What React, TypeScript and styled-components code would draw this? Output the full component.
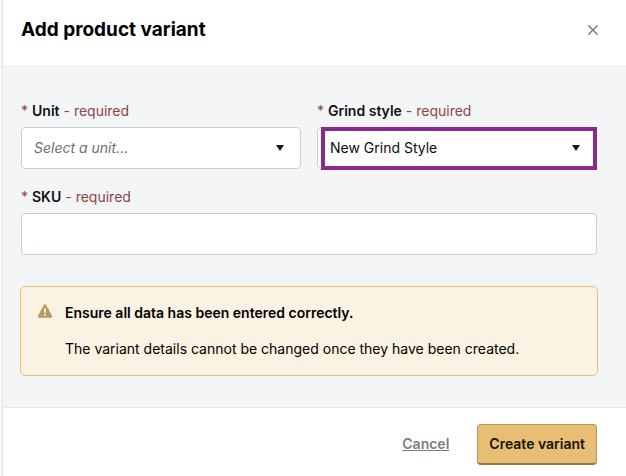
import React, { useState } from "react";
import styled, { createGlobalStyle } from "styled-components";

const GlobalStyle = createGlobalStyle`
  *, *::before, *::after { box-sizing: border-box; }
  body {
    margin: 0;
    background: #ffffff;
    color: #0b0c0d;
    font-family: Inter, "Liberation Sans", sans-serif;
    font-size: 14px;
    line-height: 20px;
  }
  button, input, select { font: inherit; color: inherit; }
`;

const Dialog = styled.form`
  display: flex;
  flex-direction: column;
  min-height: 100vh;
  background: linear-gradient(#ebebeb, #ebebeb) 1px 0 / 2px 100% no-repeat;
`;

const Header = styled.header`
  display: flex;
  align-items: center;
  justify-content: space-between;
  height: 67px;
  padding: 0 24px 6px 21px;
  border-bottom: 1px solid #e8e9ea;
`;

const Title = styled.h1`
  margin: 0;
  font-size: 19px;
  line-height: 28px;
  font-weight: 700;
  color: #000000;
`;

const CloseButton = styled.button`
  display: flex;
  padding: 4px;
  border: 0;
  background: none;
  color: #6f7779;
  cursor: pointer;
`;

const Body = styled.main`
  display: flex;
  flex-direction: column;
  gap: 18px;
  margin-left: 3px;
  padding: 34px 29px 31px 18px;
  background: #f4f5f7;
  border-bottom: 1px solid #e8e9ea;
`;

const FieldRow = styled.div`
  display: grid;
  grid-template-columns: 1fr 1fr;
  gap: 16px;
`;

const Field = styled.div`
  display: flex;
  flex-direction: column;
  gap: 6px;
`;

const Label = styled.label`
  display: flex;
  gap: 4px;
  color: #8b4549;
`;

const LabelName = styled.span`
  font-weight: 600;
  color: #101214;
`;

const Control = styled.div`
  display: grid;
  align-items: center;
  height: 42px;
  border: 1px solid #c5d0d3;
  border-radius: 4px;
  background: #ffffff;
`;

const Select = styled.select<{ $placeholder: boolean }>`
  grid-area: 1 / 1;
  width: 100%;
  height: 40px;
  padding: 0 40px 0 12px;
  border: 0;
  border-radius: 4px;
  outline: 0;
  appearance: none;
  background: transparent;
  font-style: ${(p) => (p.$placeholder ? "italic" : "normal")};
  color: ${(p) => (p.$placeholder ? "#6b6e70" : "#0b0c0d")};
`;

const Arrow = styled.svg`
  grid-area: 1 / 1;
  justify-self: end;
  margin-right: 15px;
  pointer-events: none;
`;

const Highlight = styled.div`
  grid-area: 1 / 1;
  align-self: start;
  height: 43px;
  margin: -1px -1px -2px 3px;
  border: 4px solid #8a2a8d;
  pointer-events: none;
`;

const TextInput = styled.input`
  width: 100%;
  height: 42px;
  padding: 0 12px;
  border: 1px solid #c5d0d3;
  border-radius: 4px;
  background: #ffffff;
`;

const Alert = styled.section`
  display: flex;
  gap: 12px;
  margin: 13px -1px 0;
  padding: 16px;
  border: 1px solid #e8bf74;
  border-radius: 5px;
  background: #faf2e2;
  color: #000000;
`;

const AlertText = styled.div`
  display: flex;
  flex-direction: column;
  gap: 16px;
`;

const AlertTitle = styled.h2`
  margin: 0;
  font-size: 14px;
  line-height: 20px;
  font-weight: 600;
`;

const AlertMessage = styled.p`
  margin: 0;
`;

const Footer = styled.footer`
  display: flex;
  align-items: baseline;
  justify-content: flex-end;
  gap: 28px;
  padding: 16px 29px 11px;
`;

const CancelLink = styled.a`
  font-weight: 600;
  color: #798083;
  text-decoration: underline;
`;

const PrimaryButton = styled.button`
  height: 41px;
  padding: 0 11px;
  border: 1px solid #b7965a;
  border-bottom: 2px solid #937746;
  border-radius: 4px;
  background: #e8be74;
  color: #17130c;
  font-weight: 600;
  cursor: pointer;
`;

function RequiredLabel({ id, name }: { id: string; name: string }) {
  return (
    <Label htmlFor={id}>
      <span>*</span>
      <LabelName>{name}</LabelName>
      <span>- required</span>
    </Label>
  );
}

interface SelectFieldProps {
  id: string;
  name: string;
  initial: string;
  options: string[];
  placeholder?: string;
  highlighted?: boolean;
}

function SelectField({ id, name, initial, options, placeholder, highlighted }: SelectFieldProps) {
  const [value, setValue] = useState(initial);
  return (
    <Field>
      <RequiredLabel id={id} name={name} />
      <Control>
        <Select id={id} required value={value} $placeholder={value === ""} onChange={(e) => setValue(e.target.value)}>
          {placeholder && <option value="">{placeholder}</option>}
          {options.map((o) => (
            <option key={o}>{o}</option>
          ))}
        </Select>
        <Arrow width="10" height="8" viewBox="0 0 10 8" aria-hidden="true">
          <path d="M1 1H9L5 7Z" fill="#17191a" />
        </Arrow>
        {highlighted && <Highlight />}
      </Control>
    </Field>
  );
}

export default function App() {
  return (
    <>
      <GlobalStyle />
      <Dialog aria-labelledby="dialog-title" onSubmit={(e) => e.preventDefault()}>
        <Header>
          <Title id="dialog-title">Add product variant</Title>
          <CloseButton type="button" aria-label="Close">
            <svg width="10" height="10" viewBox="0 0 10 10" fill="none" stroke="currentColor" strokeWidth="1.4">
              <path d="M0.4 0.4L9.6 9.6M9.6 0.4L0.4 9.6" />
            </svg>
          </CloseButton>
        </Header>
        <Body>
          <FieldRow>
            <SelectField id="unit" name="Unit" initial="" placeholder="Select a unit..." options={["Bag", "Box"]} />
            <SelectField id="grind" name="Grind style" initial="New Grind Style" options={["New Grind Style"]} highlighted />
          </FieldRow>
          <Field>
            <RequiredLabel id="sku" name="SKU" />
            <TextInput id="sku" type="text" required />
          </Field>
          <Alert role="note">
            <svg width="16" height="16" viewBox="0 0 16 16" aria-hidden="true">
              <path
                fill="#b99a61"
                fillRule="evenodd"
                d="M8 1.2c.4 0 .8.2 1 .6l6 11c.5.9-.1 1.9-1.1 1.9H2.1c-1 0-1.600-1-1.1-1.9l6-11c.2-.4.6-.6 1-.6ZM7.1 5.2v4.600h1.800V5.200ZM7.100 11v1.700h1.800V11Z"
              />
            </svg>
            <AlertText>
              <AlertTitle>Ensure all data has been entered correctly.</AlertTitle>
              <AlertMessage>The variant details cannot be changed once they have been created.</AlertMessage>
            </AlertText>
          </Alert>
        </Body>
        <Footer>
          <CancelLink href="#cancel">Cancel</CancelLink>
          <PrimaryButton type="submit">Create variant</PrimaryButton>
        </Footer>
      </Dialog>
    </>
  );
}
